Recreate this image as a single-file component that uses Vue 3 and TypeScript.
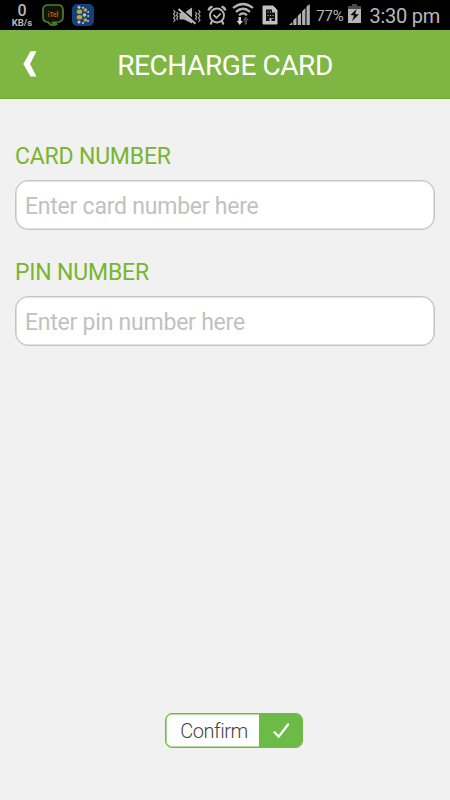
<script setup lang="ts">
import { ref } from 'vue'

interface Field {
  id: string
  label: string
  placeholder: string
}

const fields: Field[] = [
  { id: 'card', label: 'CARD NUMBER', placeholder: 'Enter card number here' },
  { id: 'pin', label: 'PIN NUMBER', placeholder: 'Enter pin number here' },
]

const values = ref<Record<string, string>>({ card: '', pin: '' })
</script>

<template>
  <div class="screen">
    <header class="status">
      <div class="group">
        <div class="speed">
          <b>0</b>
          <span>KB/s</span>
        </div>
        <svg class="chat" width="24" height="24" viewBox="0 0 24 24">
          <path d="M7 2H17Q22 2 22 7V14Q22 18 18 19L11 19.5Q14 21 16 21Q10 24 7 19Q2 19 2 14V7Q2 2 7 2Z" fill="#11160b" stroke="#527c2a" stroke-width="1.7" stroke-linejoin="round" />
          <text x="12" y="14" text-anchor="middle" font-size="6.500" font-weight="700" fill="#c4581c">iTel</text>
        </svg>
        <svg class="dots" width="24" height="24" viewBox="0 0 24 24">
          <rect x="1" y="1" width="22" height="22" rx="5" fill="#174078" />
          <g fill="#c3a52c">
            <ellipse cx="8.5" cy="8.7" rx="2.8" ry="2.2" />
            <ellipse cx="8.5" cy="14.2" rx="2.8" ry="2.2" />
            <ellipse cx="14.3" cy="7" rx="1.8" ry="1.7" />
            <ellipse cx="14.3" cy="17" rx="1.8" ry="1.7" />
          </g>
          <g fill="#b9c2c9">
            <circle cx="8" cy="4.2" r="1.5" />
            <circle cx="12" cy="4.8" r="1.1" />
            <circle cx="8" cy="19" r="1.6" />
            <circle cx="12" cy="20" r="1.1" />
            <circle cx="13.5" cy="12" r="1.8" />
            <circle cx="17.2" cy="9" r="1" />
            <circle cx="17.2" cy="13" r="1" />
            <circle cx="17" cy="18" r="1" />
          </g>
        </svg>
      </div>
      <div class="group">
        <svg class="mute" width="29" height="20" viewBox="0 0 29 20">
          <path d="M1.500 3l1.500 2-1.500 2 1.500 2-1.500 2 1.500 2-1.500 2M4.500 5l1.200 1.500-1.200 1.700 1.200 1.800-1.200 1.500 1.200 1.500M26.500 3l1.500 2-1.500 2 1.500 2-1.500 2 1.500 2-1.500 2M23.500 5l1.200 1.500-1.200 1.700 1.200 1.800-1.200 1.500 1.200 1.500" fill="none" stroke="#a9a9a9" stroke-width="1.200" />
          <path d="M7.500 6H12L20 0.500V16.500L12 12.500H7.500Z" fill="#b0b0b0" />
          <path d="M8.500 1.500L24 14.800" stroke="#000" stroke-width="1.600" />
          <path d="M6.500 2L23.500 16.800" stroke="#b8b8b8" stroke-width="2" />
        </svg>
        <svg class="alarm" width="20" height="22" viewBox="0 0 20 22">
          <g fill="none" stroke="#b8b8b8">
            <circle cx="10" cy="11.500" r="7" stroke-width="1.800" />
            <path d="M6.500 10.800L9.500 13.800L13.800 9.500" stroke-width="1.700" />
            <path d="M1.700 6.500Q2 3.500 5.500 2.600M18.300 6.500Q18 3.500 14.500 2.600" stroke-width="2.500" />
            <path d="M5 17L3.500 20.500M15 17L16.500 20.500" stroke-width="2" />
          </g>
        </svg>
        <svg class="wifi" width="22" height="24" viewBox="0 0 22 24">
          <g fill="none" stroke="#b4b4b4" stroke-width="2.200">
            <path d="M1 6Q11-2 21 6" />
            <path d="M4 9.800Q11 3.700 18 9.800" />
            <path d="M7 13.300Q11 9.300 15 13.300" />
          </g>
          <path d="M6.500 15h2.500v4h2l-3.200 4-3.200-4h1.900z" fill="#d0d0d0" />
          <path d="M12.500 22.500h2.500v-4h2l-3.200-4-3.200 4h1.900z" fill="#4b4b4b" />
        </svg>
        <svg class="sim" width="16" height="20" viewBox="0 0 16 20">
          <path d="M1 1H11L15 5V19H1Z" fill="#c0c0c0" stroke="#c0c0c0" stroke-linejoin="round" />
          <path d="M4 4.500h6v3h3v8.500H9.500v-3h-2v3H4z" fill="#111" />
          <path d="M5.500 6.500h1v1h-1zM8 6.500h1v1H8zM5.500 10h1v1h-1zM8 10h1v1H8zM10.500 10h1v1h-1zM10.500 13h1v1h-1z" fill="#c0c0c0" />
        </svg>
        <svg class="signal" width="21" height="21" viewBox="0 0 21 21">
          <path d="M0 21L3.300 18V21zM4.300 16.300L7.500 13.300V21H4.300zM8.700 12L12 8.800V21H8.700zM13.100 7.300L16.400 4V21h-3.300zM17.500 2.500L20.800 0V21h-3.300z" fill="#b0b0b0" />
        </svg>
        <span class="percent">77%</span>
        <svg class="battery" width="13" height="19" viewBox="0 0 13 19">
          <path d="M4 0h5v2h4v4H0V2h4z" fill="#4b4b4b" />
          <path d="M0 5h13v14H0z" fill="#b5b5b5" />
          <path d="M8.500 5L2.500 11L6 11.500L4 17L10.800 10.500L7.200 10Z" fill="#0a0a0a" />
        </svg>
        <time>3:30 pm</time>
      </div>
    </header>

    <nav class="bar">
      <button class="back" type="button" aria-label="Back">
        <svg width="14" height="26" viewBox="0 0 14 26">
          <path d="M7.500 0.300H13.500L7 12.900L13.500 25.600H7.500L0.300 12.900Z" fill="#fff" />
        </svg>
      </button>
      <h1>RECHARGE CARD</h1>
    </nav>

    <main class="form">
      <div v-for="field in fields" :key="field.id" class="field">
        <label :for="field.id">{{ field.label }}</label>
        <input :id="field.id" v-model="values[field.id]" type="text" :placeholder="field.placeholder" />
      </div>
      <button class="confirm" type="button">
        <span class="caption">Confirm</span>
        <span class="tick">
          <svg width="17" height="16" viewBox="0 0 17 16">
            <path d="M1.500 9.200L5.800 13.600L15 1.500" fill="none" stroke="#fff" stroke-width="2.300" stroke-linecap="round" stroke-linejoin="round" />
          </svg>
        </span>
      </button>
    </main>
  </div>
</template>

<style>
body {
  background: #f1f1f1;
}
</style>

<style scoped>
.screen {
  display: flex;
  flex-direction: column;
  width: 450px;
  height: 800px;
  overflow: hidden;
  background: #f1f1f1;
  font-family: Roboto, sans-serif;
}

svg {
  display: block;
  flex: none;
}

.status {
  display: flex;
  justify-content: space-between;
  box-sizing: border-box;
  height: 30px;
  padding: 0 10px 0 11px;
  background: #000;
  color: #b8b8b8;
}

.group {
  display: flex;
  align-items: flex-start;
}

.speed {
  display: flex;
  flex-direction: column;
  align-items: center;
  width: 22px;
  padding-top: 4px;
}

.speed b {
  font-size: 16px;
  font-weight: 500;
  line-height: 14px;
}

.speed span {
  font-size: 9.5px;
  font-weight: 700;
  line-height: 9px;
}

.chat {
  margin: 3px 0 0 8px;
}

.dots {
  margin: 3px 0 0 6px;
}

.mute {
  margin-top: 7px;
}

.alarm {
  margin: 4px 0 0 6px;
}

.wifi {
  margin: 2px 0 0 5px;
}

.sim {
  margin: 5px 0 0 8px;
}

.signal {
  margin: 4px 0 0 11px;
}

.percent {
  margin: 7px 0 0 6px;
  font-size: 15px;
  letter-spacing: -0.2px;
  line-height: 18px;
}

.battery {
  margin: 4px 0 0 5px;
}

time {
  margin: 4px 0 0 8px;
  font-size: 20px;
  letter-spacing: -0.25px;
  line-height: 25px;
  white-space: nowrap;
}

.bar {
  display: grid;
  grid-template-columns: 60px 1fr 60px;
  align-items: center;
  box-sizing: border-box;
  height: 69px;
  background: #7fb643;
  border-bottom: 1px solid #70a82c;
}

.back {
  display: flex;
  padding: 0 0 0 23px;
  border: 0;
  background: none;
}

h1 {
  margin: 4px 0 0;
  color: #fff;
  font-size: 28px;
  font-weight: 400;
  letter-spacing: -0.42px;
  line-height: 34px;
  text-align: center;
  white-space: nowrap;
}

.form {
  display: flex;
  flex: 1;
  flex-direction: column;
  padding: 43px 15px 52px;
}

.field {
  display: flex;
  flex-direction: column;
  height: 116px;
}

label {
  align-self: flex-start;
  color: #79b52f;
  font-size: 23px;
  letter-spacing: -0.2px;
  line-height: 30px;
}

input {
  box-sizing: border-box;
  width: 100%;
  height: 50px;
  margin: 8px 0 0;
  padding: 2px 9px 0;
  border: 1px solid #c4c4c4;
  border-radius: 13px;
  outline: none;
  background: #fff;
  box-shadow: inset 0 0 0 0.6px #c8c8c8;
  color: #555;
  font: 400 23px/30px Roboto, sans-serif;
  letter-spacing: -0.23px;
}

input::placeholder {
  color: #c1c1c1;
  opacity: 1;
}

.confirm {
  display: flex;
  align-self: flex-start;
  box-sizing: border-box;
  width: 138px;
  height: 35px;
  margin: auto 0 0 150px;
  padding: 0;
  border: 1px solid #6cbb46;
  border-radius: 7px;
  overflow: hidden;
  background: #fff;
  box-shadow: inset 0 0 0 0.6px #6cbb46;
  font-family: Roboto, sans-serif;
}

.caption {
  flex: 1;
  padding-left: 3px;
  color: #444;
  font-size: 20px;
  font-weight: 300;
  letter-spacing: -0.5px;
  line-height: 35px;
  text-align: center;
}

.tick {
  display: flex;
  align-items: center;
  justify-content: center;
  width: 43px;
  padding-left: 2px;
  box-sizing: border-box;
  height: 100%;
  background: #6cbb46;
}
</style>
